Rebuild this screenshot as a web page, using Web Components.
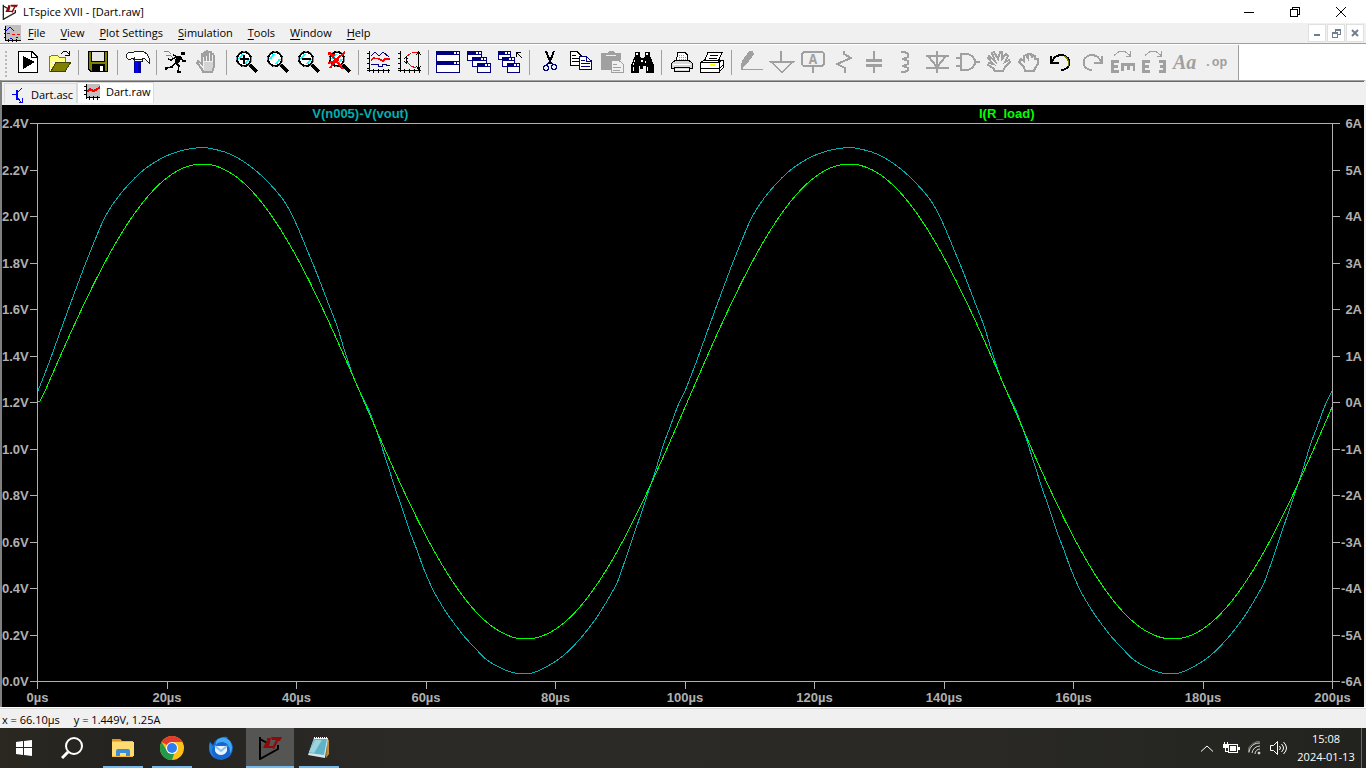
<!DOCTYPE html>
<html lang="en">
<head>
<meta charset="utf-8">
<title>LTspice XVII - [Dart.raw]</title>
<style>
html, body { margin: 0; height: 100%; }
body { font: 11px/16px "Open Sans", "Noto Sans", sans-serif; color: #000; background: #f0f0f0; }
</style>
</head>
<body>
<lt-desktop></lt-desktop>

<script>
const N = '#000080';

/* Toolbar glyphs, drawn on a 24 x 24 grid. */
const lens = '<circle cx="10" cy="9" r="7" fill="#fff" stroke="#000" stroke-width="2"/><path d="M5 9l4-5M11 14l4-5" stroke="#0ff" stroke-width="2"/><circle cx="10" cy="9" r="8" fill="none" stroke="#909090" stroke-dasharray="3 3"/><path d="M16 15l7 7" stroke="#000" stroke-width="4"/>';
const win = (x, y, w, h) => `<rect x="${x}" y="${y}" width="${w}" height="${h}" fill="${N}"/><rect x="${x + 1}" y="${y + 4}" width="${w - 2}" height="${h - 5}" fill="#fff"/><path d="M${x + w - 6} ${y + 1}h2v2h-2zM${x + w - 3} ${y + 1}h2v2h-2z" fill="#fff"/>`;
const axes = '<path d="M3.5 1V22M1 3.5h3M1 8.5h3M1 13.5h3M1 18.5h3M1 20.5H24M7.5 19v4M12.5 19v4M17.5 19v4M22.5 19v4" stroke="#000" fill="none"/>';
const curveArrow = '<path d="M3 5.5L8 1.5H14L19 5.5M19.5 1V6H15" fill="none" stroke="#a0a0a0"/>';
const ICONS = {
  run: '<path d="M2.5 1.5H16L21.5 7V22.5H2.5Z" fill="#fff" stroke="#000"/><path d="M15.5 1V7.5H22" fill="none" stroke="#000"/><path d="M7 6L19 12L7 19Z"/>',
  open: '<path d="M2.5 21V7L5 5H10L12 7H18.5V12H9L4 21Z" fill="#ffff80" stroke="#808000"/><path d="M4 9h3m2 0h3m-7 3h3m-4 3h3m-4 3h3" stroke="#fff"/><path d="M4 21.5L9 12H24L18 21.5Z" fill="#808000" stroke="#404000"/><path d="M14 4Q18-1 22 4M22.5 1V5H18" fill="none" stroke="#000"/>',
  save: '<path d="M2 1H22V22H4L2 20Z"/><path d="M3 2H21V21H5L3 19Z" fill="#808000"/><path d="M5 1H19V12H5Z" /><path d="M6 2H18V11H6Z" fill="#e8e8e8"/><path d="M6 14H19V22H6Z"/><path d="M14 16H17V21H14Z" fill="#fff"/>',
  hammer: '<path d="M9 10H16V23H9Z" fill="#0000a0"/><path d="M10 11h3v12h-3z" fill="#0000ff"/><path d="M1 5L4 2H9L11 1H18L22 4L24 8V13L20 9L17 8V11H9V8L6 9H3L1 7Z" fill="#fff" stroke="#202020"/><path d="M8 9.5h9" stroke="#202020"/>',
  halt: '<path d="M17 2h4v3h-4zM12 6h5l1 2-4 6-3-1z"/><path d="M9 5L14 7M12 7L7 10L4 9M17 8L19 11H22M12 13L15 16L14 22H17M11 13L8 17L2 18V20" fill="none" stroke="#000" stroke-width="1.5"/><path d="M0 1h4l3 3M2 5h4l3 3" fill="none" stroke="#888"/>',
  pause: '<path d="M8 22L7 19L2 13L3 11L7 14V4L9 3L10 11V2L12 1L13 11V2L16 2L16 11V4L18 4L19 6V17L17 22Z" fill="#f0f0f0" stroke="#a0a0a0" stroke-width="2"/><path d="M9 12h9v9H9z" fill="#a0a0a0" opacity=".35"/>',
  zin: lens + '<path d="M6 9h9M10 5v9" stroke="#000" stroke-width="2"/>',
  zpan: lens,
  zout: lens + '<path d="M6 9h9" stroke="#000" stroke-width="2"/>',
  zfit: lens + '<path d="M2 2L16 19M18 2L10 9L3 18M1 13L12 10M1 4L8 5" stroke="#f00" stroke-width="2" fill="none"/>',
  traces: axes + `<path d="M5 6L9 2L13 6L17 2L23 7" fill="none" stroke="${N}"/><path d="M5 10L8 8L13 9L17 11L19 9H24" fill="none" stroke="#f00" stroke-width="1.5"/><path d="M5 14.5H12V16.5H16V14.5H20V15.5H24" fill="none" stroke="${N}"/>`,
  auto: axes + '<path d="M20 2L14 3L9 7V11L14 16L19 18" fill="none" stroke="#f00" stroke-dasharray="5 1"/><path d="M21.5 2V19M19 5L21.5 2L24 5M19 16L21.5 19L24 16M9.5 7V12M7 9L9.5 7L11 9M7 11L9.5 13L11 11" fill="none" stroke="#000"/>',
  tile: win(0, 1, 24, 11) + win(0, 11, 24, 12),
  cascade: win(0, 1, 15, 10) + win(5, 7, 15, 10) + win(10, 13, 14, 10),
  closeall: win(0, 1, 13, 9) + win(4, 7, 13, 10) + win(9, 13, 13, 10) + '<path d="M18.5 7V2.5H23M19 3L24 8" fill="none" stroke="#000"/>',
  cut: `<path d="M9 1L14 14M17 1L12 14" stroke="#000" stroke-width="2"/><path d="M12 12L9 16M14 12L17 15" stroke="${N}"/><circle cx="9" cy="18" r="2.5" fill="none" stroke="${N}" stroke-width="1.5"/><circle cx="17" cy="17" r="2.5" fill="none" stroke="${N}" stroke-width="1.5"/>`,
  copy: `<path d="M2.5 1.5H9L13.5 6V15.5H2.5Z" fill="#fff" stroke="#000"/><path d="M4 5.5h4M4 8.5h7M4 11.5h7" stroke="#000"/><path d="M11.5 6.5H18L23.5 11V19.5H11.5Z" fill="#fff" stroke="${N}"/><path d="M13 10.5h4M13 13.5h9M13 16.5h9M18.5 7V11H23" stroke="${N}" fill="none"/>`,
  paste: '<path d="M2 3H8L10 1H14L16 3H22V10H12V20H2Z" fill="#a0a0a0"/><path d="M7 5h10" stroke="#f0f0f0"/><path d="M12.5 10.5H20L24 14V22.5H12.5Z" fill="#f0f0f0" stroke="#a0a0a0"/><path d="M14 14.5h4M14 17.5h8M14 20.5h7" stroke="#a0a0a0"/>',
  find: '<path d="M5 2h5v4l1 2h3l1-2V2h5v4l4 9v8h-8v-7h-3v3h-3v-3H9v7H1v-8l4-9z"/><path d="M6 3h2v2h-2zM16 3h2v2h-2zM5 9l-2 6h1zM16 9l-1 4h1zM11 10h2v2h-2zM3 17h1v4h-1zM17 17h1v4h-1z" fill="#fff"/>',
  print: '<path d="M8.5 2.5H16L18.5 5V12H7.5Z" fill="#fff" stroke="#000"/><path d="M10 5h5M10 7h7M10 9h7" stroke="#999" stroke-dasharray="1 1"/><path d="M2.5 13.5L6 10.5H20L23.5 13.5V18.5H20.5V21.5H5.5V18.5H2.5Z" fill="#d8d8d8" stroke="#000"/><path d="M4 14.5h18M6 19.5h14" stroke="#fff"/><path d="M5 17.5h16" stroke="#000"/>',
  setup: '<path d="M8 2.5H22L18 12H4Z" fill="#fff" stroke="#000"/><path d="M10 5.5h8M9 8.5h8" stroke="#000" stroke-width="1.5"/><path d="M1 12L5 10H23L19 12V22L23 18V10M.5 12.5H19.5V22.5H.5Z" fill="#fff" stroke="#000"/><path d="M1 18.5h18l4-3" fill="none" stroke="#000"/><path d="M10 14h5v2h-5z" fill="#ff0"/>',
  wire: '<path d="M10 1H14L15 4L8 14L3 18V11Z" fill="#a0a0a0"/><path d="M3 19.5H24" stroke="#a0a0a0"/><path d="M3 13V20" stroke="#a0a0a0" stroke-width="2"/>',
  ground: '<path d="M11 1V11M1 12H23L12 22Z" fill="none" stroke="#a0a0a0" stroke-width="1.5"/>',
  label: '<rect x="1" y="2" width="22" height="14" rx="3" fill="none" stroke="#a0a0a0" stroke-width="2"/><path d="M12 16V23" stroke="#a0a0a0" stroke-width="2"/><text x="12" y="14" text-anchor="middle" font-family="Liberation Mono" font-weight="700" font-size="14" fill="#a0a0a0">A</text>',
  resistor: '<path d="M12 1V4L19 8L5 14L13 18V23" fill="none" stroke="#a0a0a0" stroke-width="2"/>',
  capacitor: '<path d="M11 1V9M11 17V23" stroke="#a0a0a0" stroke-width="2"/><path d="M3 10.5H19M3 15.5H19" stroke="#a0a0a0" stroke-width="3"/>',
  inductor: '<path d="M7 2H11L14 4V7L9 9L14 11V14L9 16L14 18V20L11 22H7" fill="none" stroke="#a0a0a0" stroke-width="2"/>',
  diode: '<path d="M12 1V23M1 6H24M1 18H24M3 6L12 17L21 6" fill="none" stroke="#a0a0a0" stroke-width="2"/>',
  gate: '<path d="M5 4H12L16 6L19 10V14L16 18L12 20H5ZM0 8H5M0 16H5M19 12H24" fill="none" stroke="#a0a0a0" stroke-width="2"/>',
  move: '<path d="M8 21L6 18L1 15L2 13L6 14L1 8L2 6L8 11L5 3L7 2L11 9L13 2L15 2L15 9L19 4L21 6L18 12L22 10L23 12L18 17L16 21Z" fill="none" stroke="#a0a0a0" stroke-width="2"/>',
  drag: '<path d="M7 21L6 17L1 12L3 9L6 11V6L8 5L10 8V4L13 4L14 8V5L17 6V9L20 9V14L17 18L16 21Z" fill="none" stroke="#a0a0a0" stroke-width="2"/>',
  undo: '<path d="M3 12C5 6 9 5 13 5C24 7 22 20 12 20" fill="none" stroke="#000" stroke-width="2"/><path d="M2 6V13H10" fill="none" stroke="#000" stroke-width="2"/><path d="M15 6C20 8 20 14 19 16" fill="none" stroke="#808000"/>',
  redo: '<path d="M21 12C19 6 15 5 11 5C0 7 2 20 12 20" fill="none" stroke="#a0a0a0" stroke-width="2"/><path d="M22 6V13H14" fill="none" stroke="#a0a0a0" stroke-width="2"/>',
  rotate: curveArrow + '<path d="M0 10h8v3H3v2h4v3H3v2h5v3H0zM10 13h14v8h-2v-5h-3v4h-3v-4h-3v5h-3z" fill="#a0a0a0"/>',
  mirror: curveArrow + '<path d="M0 10h8v3H3v2h4v3H3v2h5v3H0zM24 10h-7v3h4v2h-3v3h3v2h-4v3h7z" fill="#a0a0a0"/>',
  text: '<text x="0" y="19" font-family="Liberation Serif" font-style="italic" font-weight="700" font-size="20" fill="#a0a0a0">Aa</text>',
  op: '<text x="0" y="16" font-family="Liberation Mono" font-weight="700" font-size="13" fill="#a0a0a0">.op</text>'
};

const ltLogo = s => `<svg width="${s}" height="${s}" viewBox="0 0 24 24"><path d="M2 1V23L20 13V9M2 3L11 8" fill="none" stroke="${s > 20 ? '#000' : '#222'}" stroke-width="2"/><path d="M9 2H13L11 10H15L14 12H5L9 4ZM13 1H24L22 5H20L16 13L14 12L18 4H14Z" fill="#8b0a0a"/></svg>`;

function define(name, html, setup) {
  const t = document.createElement('template');
  t.innerHTML = '<style>*{box-sizing:border-box}svg{display:block;flex:none}button{font:inherit;color:inherit;border:0;background:none;padding:0;margin:0}</style>' + html;
  customElements.define(name, class extends HTMLElement {
    constructor() {
      super();
      this.attachShadow({ mode: 'open' }).append(t.content.cloneNode(true));
    }
    connectedCallback() { if (setup) setup(this, this.shadowRoot); }
  });
}

define('title-bar', `<style>
:host{display:flex;height:23px;background:#fff;align-items:center;padding:0 2px}
span{flex:1;padding-left:5px}
button{width:46px;height:21px;display:flex;align-items:center;justify-content:center}
</style>${ltLogo(16)}<span><slot></slot></span>
<button aria-label="Minimize"><svg width="10" height="10" shape-rendering="crispEdges"><path d="M0 5.5h10" stroke="#000"/></svg></button>
<button aria-label="Restore"><svg width="10" height="10" fill="none" stroke="#000" shape-rendering="crispEdges"><path d="M.5 2.5h7v7h-7zM2.5 2V.5h7v7H8"/></svg></button>
<button aria-label="Close"><svg width="10" height="10" stroke="#000"><path d="M0 0l10 10M10 0L0 10"/></svg></button>`);

define('menu-item', `<style>
:host{display:block}
button{height:20px;padding:0 8px 0 7px;white-space:nowrap}
b{font-weight:400;text-decoration:underline;text-underline-offset:2px}
</style><button><b></b><slot></slot></button>`, (el, r) => {
  r.querySelector('b').textContent = el.getAttribute('key');
});

define('menu-bar', `<style>
:host{display:flex;height:22px;background:#f0f0f0;border-bottom:1px solid #fff;box-shadow:inset 0 -1px #a0a0a0;padding:0 2px 1px 4px;align-items:center}
nav{display:flex;flex:1}
.c{display:flex}
.c button{width:18px;height:18px;background:#fff;border:1px solid #e0e0e0;margin-left:1px;display:flex;align-items:center;justify-content:center}
</style>
<svg width="17" height="17" shape-rendering="crispEdges"><path d="M1 0h16v16H1z" fill="#c0c0c0"/><path d="M2 6l4-4 4 4" fill="none" stroke="#00f"/><path d="M3 8.5h3m2 1h3m2 0h3" stroke="#f00"/><path d="M6 13.5h2m4-1h2" stroke="#00f"/><path d="M1.5 1v15M0 4.5h2M0 8.5h2M0 12.5h2M1 15.5h16M4.5 14v3M8.5 14v3M12.5 14v3" stroke="#000"/></svg>
<nav><slot></slot></nav>
<div class="c">
<button aria-label="Minimize document"><svg width="8" height="8"><path d="M1 6h6" stroke="#6f7e8e" stroke-width="2"/></svg></button>
<button aria-label="Restore document"><svg width="9" height="9" fill="none" stroke="#6f7e8e" shape-rendering="crispEdges"><path d="M.5 3.5h5v5h-5zM3 2.5V.5h5.5v5H6"/><path d="M0 4h6M3 1h6" stroke-width="2"/></svg></button>
<button aria-label="Close document"><svg width="8" height="8" stroke="#6f7e8e" stroke-width="2"><path d="M1 1l6 6M7 1L1 7"/></svg></button>
</div>`);

define('tool-button', `<style>
:host{display:block}
button{width:31px;height:35px;padding:5px 3px 6px 4px}
svg{overflow:visible}
</style><button><svg width="24" height="24" viewBox="0 0 24 24" shape-rendering="crispEdges"></svg></button>`, (el, r) => {
  r.querySelector('svg').innerHTML = ICONS[el.getAttribute('icon')];
  const b = r.querySelector('button');
  b.setAttribute('aria-label', el.getAttribute('icon'));
  b.disabled = el.hasAttribute('off');
});

define('tool-separator', `<style>:host{display:block;width:8px;padding:5px 3px 5px 4px}i{display:block;height:25px;background:#a0a0a0}</style><i></i>`);

define('tool-bar', `<style>
:host{display:flex;height:35px;background:#fff}
div{display:flex;background:#f0f0f0;border-right:1px solid #a0a0a0;padding-right:7px}
.grip{width:12px;height:27px;margin:5px 0;background:radial-gradient(circle at 6px 2px,#b8b8b8 1px,transparent 1px) 0 0/12px 4px #f0f0f0}
</style><div><i class="grip"></i><slot></slot></div>`, (el) => {
  const groups = 'run open|save|hammer|halt pause-|zin zpan zout zfit|traces auto|tile cascade closeall|cut copy paste- find|print setup|wire- ground- label- resistor- capacitor- inductor- diode- gate- move- drag- undo redo- rotate- mirror- text- op-';
  el.innerHTML = groups.split('|').map(g => g.split(' ').map(n =>
    `<tool-button icon="${n.replace('-', '')}"${n.endsWith('-') ? ' off' : ''}></tool-button>`).join('')).join('<tool-separator></tool-separator>');
});

define('doc-tab', `<style>
:host{display:block}
button{display:flex;align-items:center;gap:4px;height:20px;padding:3px 0 0 6px;border:1px solid #dadada;border-bottom:0;width:73px;white-space:nowrap}
:host([active]) button{background:#fff;height:21px;padding:0 0 2px 6px;width:77px;gap:6px}
</style><button><slot name="icon"></slot><slot></slot></button>`);

define('tab-strip', `<style>
:host{display:flex;align-items:flex-end;padding:0 2px 2px;background:#f0f0f0}
svg{width:16px;height:16px}
</style>
<doc-tab><svg slot="icon" shape-rendering="crispEdges" fill="none" stroke="#00f"><path d="M1 7.5h4M6 6l5-5M6 10l4 5"/><path d="M6 3v10" stroke-width="2"/><path d="M11 11v4H8"/></svg>Dart.asc</doc-tab>
<doc-tab active><svg slot="icon" shape-rendering="crispEdges"><path d="M2 0h14v13H2z" fill="#c0c0c0"/><path d="M2.5 0v15M0 2.5h3M0 6.5h3M0 10.5h3M2 13.5h14M5.5 12v4M9.5 12v4M13.5 12v4" stroke="#000"/><path d="M3 8l3-3 3 2 3-1 4-3" fill="none" stroke="#f00" stroke-width="2"/></svg>Dart.raw</doc-tab>`);

/* Waveform viewer: both axes, frame and the two traces. */
const W = 647;
const CYAN = [[38,391],[50,360],[67,313],[83,270],[95,240],[105,217],[118,197],[140,173],[162,158],[180,151],[196,148],[208,148],[230,154],[250,166],[267,181],[282,198],[291,213],[298,228],[308,252],[317,274],[327,300],[337,326],[344,349],[352,373],[360,392],[368,408],[373,421],[380,441],[395,488],[400,502],[410,532],[417,550],[423,567],[428,579],[433,590],[438,599],[448,615],[463,635],[475,648],[487,660],[503,669],[515,673],[532,673],[548,666],[563,656],[580,639],[597,617],[615,587],[620,575],[628,552],[633,537],[643,508],[650,487],[656,469],[663,446],[670,427],[677,408],[681,399]];
function smooth(p) {
  let d = `M${p[0]}`;
  for (let i = 0; i < p.length - 1; i++) {
    const a = p[i - 1] || p[i], b = p[i], c = p[i + 1], e = p[i + 2] || c;
    d += `C${b[0] + (c[0] - a[0]) / 6} ${b[1] + (c[1] - a[1]) / 6} ${c[0] - (e[0] - b[0]) / 6} ${c[1] - (e[1] - b[1]) / 6} ${c[0]} ${c[1]}`;
  }
  return d;
}
define('wave-plot', `<style>
:host{display:grid;flex:1;min-height:300px;background:#000;color:#b0b0b0;font:bold 13px/15px "Liberation Sans",Arial,sans-serif;grid-template:18px 1fr 25px/35px 1fr 31px;overflow:hidden}
.legend{grid-area:1/2;display:grid;grid-template-columns:1fr 1fr;text-align:center;line-height:16px;padding:1px 3px 0 0}
.v{color:#00b0b0}.i{color:#0f0}
.frame{grid-area:2/2;border:1px solid #b0b0b0;min-height:0;min-width:0;display:grid}
.frame svg{width:100%;height:100%;min-height:0}
.y{display:flex;flex-direction:column;justify-content:space-between;margin:-7px 0;min-height:0}
.y div{display:flex;justify-content:space-between;align-items:center;height:15px;white-space:nowrap}
.y i{width:7px;height:1px;background:#b0b0b0}
.l{grid-area:2/1}
.r{grid-area:2/3;padding-right:2px}
.x{grid-area:3/2;display:flex;justify-content:space-between}
.x div{width:1px;display:flex;flex-direction:column;align-items:center;white-space:nowrap;line-height:17px}
.x i{width:1px;height:7px;flex:none;background:#b0b0b0}
path{fill:none;vector-effect:non-scaling-stroke}
</style>
<div class="legend"><span class="v">V(n005)-V(vout)</span><span class="i">I(R_load)</span></div>
<div class="y l"></div>
<div class="frame"><svg viewBox="38 124 1294 557" preserveAspectRatio="none" shape-rendering="crispEdges"><path class="tv" stroke="#00b0b0"/><path class="ti" stroke="#0f0"/></svg></div>
<div class="y r"></div><div class="x"></div>`, (el, r) => {
  let l = '', rr = '', x = '';
  for (let k = 12; k >= 0; k--) {
    l += `<div><span>${(k / 5).toFixed(1)}V</span><i></i></div>`;
    rr += `<div><i></i><span>${k - 6}A</span></div>`;
  }
  for (let k = 0; k <= 10; k++) x += `<div><i></i><span>${k * 20}µs</span></div>`;
  r.querySelector('.l').innerHTML = l;
  r.querySelector('.r').innerHTML = rr;
  r.querySelector('.x').innerHTML = x;
  const pts = [...CYAN, ...CYAN.map(([a, b]) => [a + W, b]), [38 + 2 * W, 391]];
  r.querySelector('.tv').setAttribute('d', smooth(pts));
  let g = 'M38 402L40 401';
  for (let t = 44; t <= 1332; t += 4) g += `L${t} ${(401.5 - 237.5 * Math.sin(2 * Math.PI * (t - 40.5) / W)).toFixed(2)}`;
  r.querySelector('.ti').setAttribute('d', g);
});

define('status-bar', `<style>
:host{display:flex;gap:14px;height:21px;padding:4px 2px 0;border-top:1px solid #fff;box-shadow:inset 0 1px #d8d8d8;background:#f0f0f0;white-space:nowrap}
</style><span>x = 66.10µs</span><span>y = 1.449V, 1.25A</span>`);

define('task-button', `<style>
:host{display:block}
button{width:48px;height:40px;display:flex;align-items:center;justify-content:center;position:relative}
:host([open]) button::after{content:"";position:absolute;bottom:0;left:4px;right:4px;height:2px;background:#76b9ed}
:host([active]) button{background:#555553}
:host([active]) button::after{left:0;right:0}
</style><button><slot></slot></button>`, (el, r) => r.querySelector('button').setAttribute('aria-label', el.title));

define('task-bar', `<style>
:host{display:flex;height:40px;background:linear-gradient(90deg,#2a2821,#24231f 8%,#2b2a26 30%,#2a2926 70%,#22231e);color:#fff;align-items:center}
.apps{display:flex;flex:1;gap:1px}
.apps task-button:first-child{margin-right:-1px}
.apps task-button:nth-child(2){margin-right:2px}
.tray{display:flex;align-items:center}
.tray button{height:40px;display:flex;align-items:center;justify-content:center;width:24px}
.tray .clock{width:70px;flex-direction:column;line-height:18px}
.peek{width:5px;height:40px;border-left:1px solid #6a6a66}
</style>
<div class="apps">
<task-button title="Start"><svg width="16" height="16" fill="#fff"><path d="M0 2l7-1v6H0zM8 1l8-1v7H8zM0 8h7v7l-7-1zM8 8h8v8l-8-1z"/></svg></task-button>
<task-button title="Search"><svg width="22" height="22" fill="none" stroke="#fff" stroke-width="2"><circle cx="13" cy="9" r="8"/><path d="M7 15l-6 6" stroke-width="3"/></svg></task-button>
<task-button title="File Explorer" open><svg width="22" height="20"><path d="M0 1h8l2 2h11v16H0z" fill="#f5b82e"/><path d="M0 4h22v14H0z" fill="#ffdb70"/><path d="M0 1h8l1 2H0z" fill="#d99a1c"/><path d="M4 18v-5q0-2 2-2h10q2 0 2 2v5h-4v-3H8v3z" fill="#3a8ed8"/></svg></task-button>
<task-button title="Chrome" open><svg width="24" height="24" viewBox="0 0 24 24"><circle cx="12" cy="12" r="12" fill="#fbc116"/><path d="M12 12L1.6 6A12 12 0 0 1 22.4 6H12z" fill="#e33b2e"/><path d="M12 24A12 12 0 0 1 1.6 6L7 15q2 3 5 3l2 0z" fill="#229a4a"/><circle cx="12" cy="12" r="6" fill="#fff"/><circle cx="12" cy="12" r="5" fill="#2f7df0"/></svg></task-button>
<task-button title="Thunderbird"><svg width="24" height="24" viewBox="0 0 24 24"><path d="M1 6L4 9Q6 3 11 2Q14 0 19 1L18 3Q23 5 24 11Q24 22 13 24Q4 24 1 17Q-1 12 1 6z" fill="#1767cf"/><path d="M9 3Q16-1 21 5Q25 12 21 18Q22 8 14 6Q8 6 7 9Q6 6 9 3z" fill="#43a8f5"/><path d="M1 6l3 5q-3 5 2 11Q-2 17 1 6z" fill="#1e86e5"/><path d="M6 10h12v5q-2 4-6 4t-6-4z" fill="#e8f5ff"/><path d="M6 10l6 5 6-5" fill="none" stroke="#8cc3ef" stroke-width="2"/></svg></task-button>
<task-button title="LTspice XVII" open active>${ltLogo(24)}</task-button>
<task-button title="Notepad" open><svg width="24" height="24" viewBox="0 0 24 24"><path d="M20 3l2 1v14l-3 4z" fill="#b98b3d"/><path d="M7 2h14l-3 20-17-3z" fill="#d7e6ea"/><path d="M7 3h13l-3 16-15-2z" fill="#5fb3c7"/><path d="M8 4h7l-8 13-5-1z" fill="#9bd4df"/><path d="M7 2h14" stroke="#fff" stroke-width="2" stroke-dasharray="1 1"/></svg></task-button>
</div>
<div class="tray">
<button aria-label="Show hidden icons"><svg width="12" height="7" fill="none" stroke="#fff"><path d="M0 6.5L6 1l6 5.5"/></svg></button>
<button aria-label="Power"><svg width="17" height="12" shape-rendering="crispEdges"><path d="M5.5 2.5h9v8h-9z" fill="none" stroke="#fff"/><path d="M7 4h6v5H7zM15 5h2v3h-2zM0 2h5v4H0zM1 0h1v2H1zM4 0h1v2H4zM2 6h1v4H2zM2 9h3v1H2z" fill="#fff"/></svg></button>
<button aria-label="Network"><svg width="14" height="14" fill="none" stroke="#d8d8d8"><path d="M1 11A10 10 0 0 1 12 2M4 12A8 8 0 0 1 12 5M7 13A5 5 0 0 1 12 8"/><circle cx="11" cy="12" r="1" fill="#fff"/><path d="M1 12L0 8Q4 1 12 0" opacity=".5"/></svg></button>
<button aria-label="Volume"><svg width="18" height="14" fill="none" stroke="#fff"><path d="M.5 4.5h3l4-4v13l-4-4h-3zM9.5 5q2 2 0 4M11.5 3q4 4 0 8M13.5 1q6 6 0 12"/></svg></button>
<button class="clock"><span>15:08</span><span>2024-01-13</span></button>
</div><div class="peek"></div>`);

define('lt-desktop', `<style>
:host{display:flex;flex-direction:column;min-height:100vh}
main{flex:1;display:flex;flex-direction:column;border:solid;border-width:1px 2px 0;border-color:#a0a0a0 #f0f0f0 #fff #808080}
tab-strip{border-top:1px solid #696969;height:24px}
</style>
<title-bar>LTspice XVII - [Dart.raw]</title-bar>
<menu-bar><menu-item key="F">ile</menu-item><menu-item key="V">iew</menu-item><menu-item key="P">lot Settings</menu-item><menu-item key="S">imulation</menu-item><menu-item key="T">ools</menu-item><menu-item key="W">indow</menu-item><menu-item key="H">elp</menu-item></menu-bar>
<tool-bar></tool-bar>
<main><tab-strip></tab-strip><wave-plot></wave-plot></main>
<status-bar></status-bar>
<task-bar></task-bar>`);
</script>
</body>
</html>
